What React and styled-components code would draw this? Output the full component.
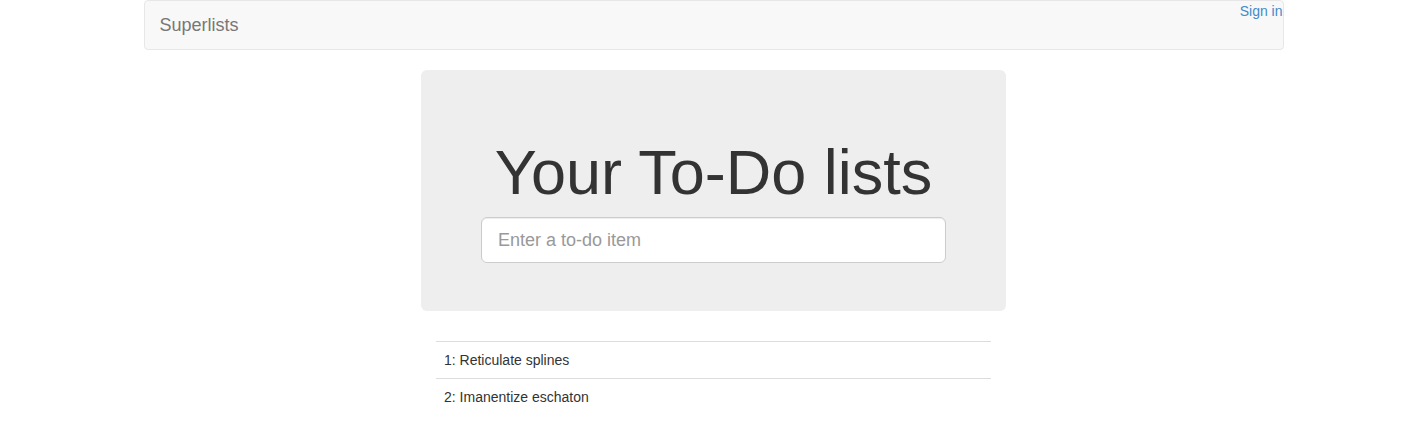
import React from 'react';
import styled, { createGlobalStyle } from 'styled-components';

const GlobalStyle = createGlobalStyle`
  * { box-sizing: border-box; }
  body {
    margin: 0;
    font-family: 'Liberation Sans', Arial, sans-serif;
    font-size: 14px;
    line-height: 1.42857;
    color: #333;
    background: #fff;
  }
`;

const Container = styled.div`
  width: 1140px;
  margin: 0 auto;
`;

const Navbar = styled.nav`
  display: flex;
  justify-content: space-between;
  align-items: flex-start;
  height: 50px;
  margin-bottom: 20px;
  background: #f8f8f8;
  border: 1px solid #e7e7e7;
  border-radius: 4px;
`;

const Brand = styled.a`
  padding: 14px 15px;
  font-size: 18px;
  line-height: 20px;
  color: #777;
  text-decoration: none;
`;

const SignIn = styled.a`
  font-size: 14px;
  line-height: 20px;
  color: #428bca;
  text-decoration: none;
`;

const Jumbotron = styled.div`
  width: 585px;
  margin: 0 auto 30px;
  padding: 48px 60px;
  background: #eee;
  border-radius: 6px;
  text-align: center;
`;

const Title = styled.h1`
  margin: 20px 0 10px;
  font-size: 63px;
  font-weight: 500;
  line-height: 1.1;
  color: #333;
`;

const Input = styled.input`
  display: block;
  width: 100%;
  height: 46px;
  padding: 10px 16px;
  font-family: inherit;
  font-size: 18px;
  line-height: 1.33;
  color: #555;
  background: #fff;
  border: 1px solid #ccc;
  border-radius: 6px;
  box-shadow: inset 0 1px 1px rgba(0, 0, 0, 0.075);
  outline: none;
  &::placeholder { color: #999; }
`;

const Table = styled.table`
  width: 555px;
  margin: 0 auto;
  border-collapse: collapse;
  td {
    padding: 8px;
    line-height: 20px;
    border-top: 1px solid #ddd;
    text-align: left;
  }
`;

const items = ['Reticulate splines', 'Imanentize eschaton'];

export default function App() {
  return (
    <>
      <GlobalStyle />
      <Container>
        <Navbar>
          <Brand href="#">Superlists</Brand>
          <SignIn href="#">Sign in</SignIn>
        </Navbar>
        <Jumbotron>
          <Title>Your To-Do lists</Title>
          <form>
            <Input placeholder="Enter a to-do item" />
          </form>
        </Jumbotron>
        <Table>
          <tbody>
            {items.map((item, i) => (
              <tr key={item}>
                <td>{i + 1}: {item}</td>
              </tr>
            ))}
          </tbody>
        </Table>
      </Container>
    </>
  );
}
